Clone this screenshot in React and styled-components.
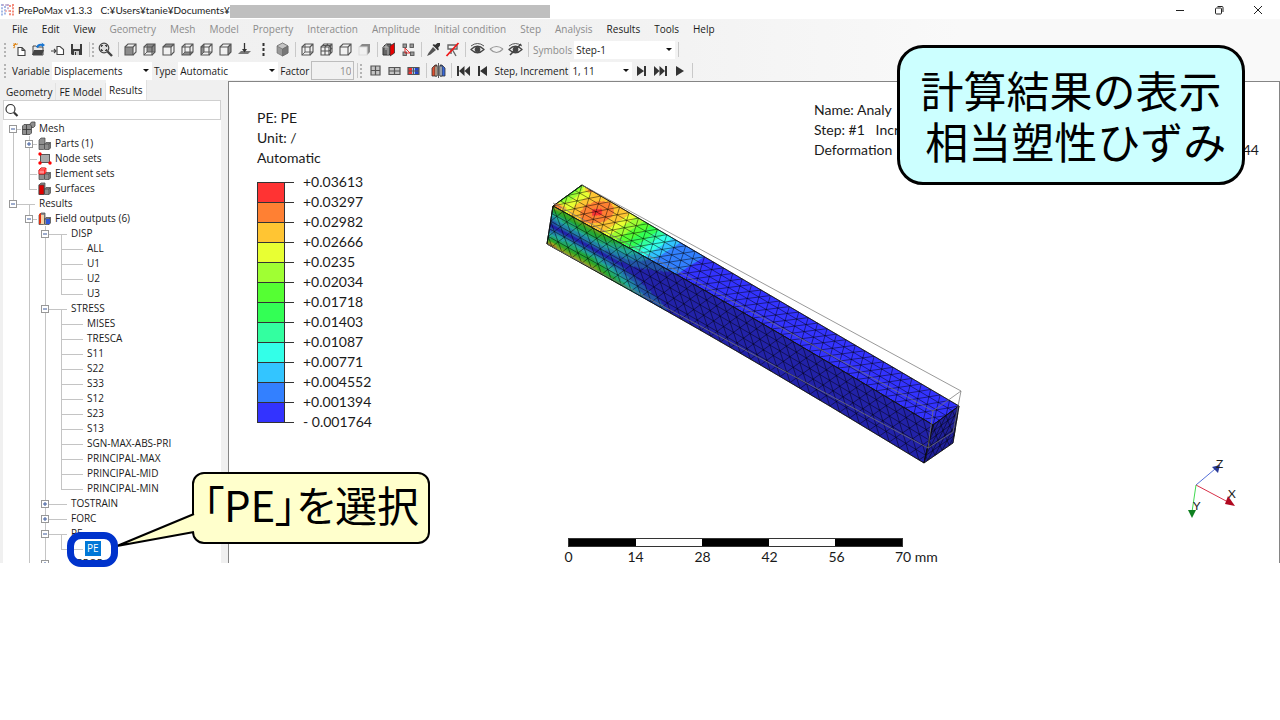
import React from "react";
import styled, { createGlobalStyle, css } from "styled-components";

const GlobalStyle = createGlobalStyle`
	* {
		box-sizing: border-box;
	}
	body {
		margin: 0;
		background: #fff;
	}
	button, input, select {
		font: inherit;
		color: inherit;
		border: 0;
		margin: 0;
		padding: 0;
		background: none;
	}
`;

const Page = styled.div`
	position: relative;
	min-height: 100vh;
	overflow: hidden;
	font-family: "Open Sans", "Noto Sans CJK JP", sans-serif;
	font-size: 10px;
	color: #1a1a1a;
`;

/* ---------- title bar ---------- */

const TitleBar = styled.header`
	display: flex;
	align-items: center;
	height: 19px;
	padding-right: 3px;
	background: #fff;
	font-family: Lato, "Open Sans", sans-serif;
	white-space: nowrap;
`;
const AppTitle = styled.span`
	margin: 0 8px 0 3px;
`;
const Redacted = styled.span`
	width: 320px;
	height: 13px;
	margin-top: 4px;
	background: #bfbfbf;
`;
const WindowButtons = styled.div`
	display: flex;
	margin-left: auto;
`;
const WindowButton = styled.button`
	display: flex;
	align-items: center;
	justify-content: center;
	width: 39px;
	height: 19px;
`;

/* ---------- menu and toolbars ---------- */

const Bars = styled.div`
	background: linear-gradient(90deg, #f0f0f0 0%, #f2f2f2 50%, #f9f9f9 75%);
`;
const MenuBar = styled.nav`
	display: flex;
	align-items: center;
	gap: 14px;
	height: 20px;
	padding-left: 12px;
`;
const MenuItem = styled.button`
	white-space: nowrap;
	color: ${(props) => (props.disabled ? "#8c8c8c" : "#1a1a1a")};
`;
const ToolBar = styled.div`
	display: flex;
	align-items: center;
	height: 21px;
	padding-left: 4px;
`;
const Grip = styled.span`
	width: 2px;
	height: 14px;
	margin-right: ${(props) => props.$after || 4}px;
	background: repeating-linear-gradient(#b4b4b4 0 2px, transparent 2px 4px);
`;
const Separator = styled.span`
	width: 1px;
	height: 15px;
	margin: 0 2px 0 3px;
	background: #c9c9c9;
`;
const ToolButton = styled.button`
	display: flex;
	align-items: center;
	justify-content: center;
	flex: none;
	width: 19px;
	height: 19px;
`;
const ToolLabel = styled.label`
	flex: none;
	margin: 0 2px;
	white-space: nowrap;
	color: ${(props) => (props.$muted ? "#8c8c8c" : "#1a1a1a")};
`;
const SelectBox = styled.span`
	position: relative;
	flex: none;
	width: ${(props) => props.$width}px;
	&::after {
		content: "";
		position: absolute;
		right: 3px;
		top: 7px;
		border: 3px solid transparent;
		border-top-color: #111;
		pointer-events: none;
	}
`;
const Select = styled.select`
	appearance: none;
	width: 100%;
	height: 18px;
	padding-left: 2px;
	background: #fff;
`;
const FactorInput = styled.input`
	width: 43px;
	height: 19px;
	padding-right: 2px;
	text-align: right;
	color: #8c8c8c;
	border: 1px solid #bdbdbd;
`;

/* ---------- side panel ---------- */

const Main = styled.main`
	display: flex;
`;
const SidePanel = styled.aside`
	flex: none;
	width: 228px;
	padding: 0 7px 0 3px;
	background: #f0f0f0;
`;
const Tabs = styled.div`
	display: flex;
	align-items: flex-end;
	height: 19px;
`;
const Tab = styled.button`
	height: ${(props) => (props.$active ? 20 : 17)}px;
	padding: 0 3px;
	background: ${(props) => (props.$active ? "#fff" : "#f0f0f0")};
	border-right: 1px solid #e2e2e2;
	white-space: nowrap;
`;
const SearchBox = styled.label`
	display: flex;
	align-items: center;
	height: 20px;
	background: #fff;
	border: 1px solid #cfcfcf;
`;
const SearchInput = styled.input`
	flex: 1;
	min-width: 0;
	outline: 0;
`;
const Tree = styled.div`
	padding: 1px 0 0 2px;
	background: #fff;
`;
const TreeRow = styled.div`
	display: flex;
	align-items: stretch;
	height: ${(props) => (props.$cut ? 7 : 15)}px;
	overflow: hidden;
`;
const line = "#c4c4c4";
const Guide = styled.span`
	position: relative;
	flex: none;
	width: 16px;
	${(props) =>
		props.$up &&
		css`
			background: linear-gradient(${line}, ${line}) 8px 0 / 1px 8px no-repeat;
		`}
	&::before {
		content: "";
		position: absolute;
		left: 8px;
		top: 8px;
		height: 7px;
		border-left: ${(props) => (props.$down ? `1px solid ${line}` : "0")};
	}
	&::after {
		content: "";
		position: absolute;
		left: ${(props) => (props.$across === "full" ? 0 : 8)}px;
		right: ${(props) => (props.$across === "full" ? 2 : 0)}px;
		top: 8px;
		border-top: ${(props) => (props.$across ? `1px solid ${line}` : "0")};
	}
`;
const Expander = styled.svg`
	position: absolute;
	z-index: 1;
	left: 4px;
	top: 4px;
`;
const TreeIcon = styled.span`
	flex: none;
	width: 16px;
`;
const TreeLabel = styled.span`
	padding: 0 2px;
	line-height: 15px;
	white-space: nowrap;
	${(props) =>
		props.$selected &&
		css`
			color: #fff;
			background: #0078d7;
		`}
`;

/* ---------- viewer ---------- */

const Viewer = styled.section`
	flex: 1;
	min-width: 0;
	display: grid;
	grid-template-columns: 311px 1fr 465px;
	grid-template-rows: 98px 340px 43px;
	background: #fff;
	border: 1px solid #858585;
	border-bottom: 0;
	font-family: Lato, "Open Sans", sans-serif;
	font-size: 14px;
	line-height: 20px;
`;
const Legend = styled.div`
	grid-row: 1 / 4;
	padding: 26px 0 0 28px;
`;
const Scale = styled.div`
	display: flex;
	margin-top: 4px;
`;
const Swatches = styled.div`
	width: 28px;
	margin-top: 10px;
`;
const Swatch = styled.div`
	height: 20px;
	background: ${(props) => props.$color};
	border: 1px solid #333;
	border-bottom: 0;
	&:last-child {
		height: 21px;
		border-bottom: 1px solid #333;
	}
`;
const Tick = styled.div`
	display: flex;
	align-items: center;
	gap: 9px;
	height: 20px;
	&::before {
		content: "";
		width: 9px;
		border-top: 1px solid #333;
	}
`;
const Info = styled.div`
	grid-column: 3;
	padding: 18px 20px 0 0;
	white-space: pre;
`;
const InfoLine = styled.div`
	display: flex;
	justify-content: space-between;
`;
const Stage = styled.div`
	grid-column: 2 / 4;
	grid-row: 2;
	display: flex;
	justify-content: space-between;
`;
const Model = styled.svg`
	flex: none;
`;
const Triad = styled.svg`
	align-self: flex-end;
	margin-right: 34px;
	overflow: visible;
`;
const Ruler = styled.div`
	grid-column: 2 / 4;
	grid-row: 3;
	padding: 18px 0 0 28px;
`;
const RulerBar = styled.div`
	display: flex;
	width: 335px;
	height: 9px;
	border: 1px solid #333;
`;
const RulerPart = styled.span`
	flex: 1;
	background: ${(props) => (props.$filled ? "#000" : "#fff")};
`;
const RulerNumbers = styled.div`
	display: flex;
	margin-left: -33px;
`;
const RulerNumber = styled.span`
	width: 67px;
	text-align: center;
	white-space: nowrap;
	&:last-child {
		padding-left: 25px;
		text-align: left;
	}
`;

/* ---------- notes on top of the window ---------- */

const Headline = styled.h1`
	position: absolute;
	top: 45px;
	right: 35px;
	width: 348px;
	height: 140px;
	margin: 0;
	padding: 16px 0;
	border: 3px solid #000;
	border-radius: 26px;
	background: #ccffff;
	color: #000;
	font: 400 43px / 51px "Noto Sans CJK JP", sans-serif;
	text-align: center;
	white-space: pre;
`;
const Note = styled.p`
	position: absolute;
	left: 192px;
	top: 472px;
	width: 238px;
	height: 72px;
	margin: 0;
	border: 2px solid #000;
	border-radius: 12px;
	background: #ffffcc;
	color: #000;
	font: 400 42px / 60px "Noto Sans CJK JP", sans-serif;
	font-feature-settings: "palt";
	text-align: center;
	white-space: nowrap;
`;
const NoteTail = styled.svg`
	position: absolute;
	left: 114px;
	top: 508px;
`;
const Ring = styled.div`
	position: absolute;
	left: 67px;
	top: 532px;
	width: 51px;
	height: 35px;
	border: 7px solid #0033cc;
	border-radius: 14px;
`;

/* ---------- icons ---------- */

const CUBE_FACES = {
	front: "M2 5H10V13H2Z",
	back: "M5 2H13V10H5Z",
	top: "M2 5L5 2H13L10 5Z",
	bottom: "M2 13L5 10H13L10 13Z",
	left: "M2 5L5 2V10L2 13Z",
	right: "M10 5L13 2V10L10 13Z",
};

const Cube = ({ face, wire, grid, solid }) => (
	<g fill='none' stroke='#555' strokeWidth='1.1'>
		{face && <path d={CUBE_FACES[face]} fill='#8c8c8c' stroke='none' />}
		{solid && <path d='M2 5L5 2H13V10L10 13V5Z' fill='#888' stroke='none' />}
		<path d='M2 5H10V13H2Z' stroke={solid ? "#ddd" : "#555"} />
		{!solid && <path d='M2 5L5 2H13V10L10 13M10 5L13 2' />}
		{wire && <path d='M5 2V10H13M5 10L2 13' strokeWidth='0.9' />}
		{grid && <path d='M6 5V13M2 9H10M6 5L9 2M10 9L13 6M3.500 3.500H11.500V11.500' />}
	</g>
);

const Grid = ({ rows, colored }) => (
	<g>
		{colored && (
			<>
				<rect x='2' y='4' width='4' height='8' fill='#e33' />
				<rect x='6' y='4' width='3' height='8' fill='#9cf' />
				<rect x='9' y='4' width='4' height='8' fill='#24c' />
			</>
		)}
		<path
			d={rows === "tall" ? "M3 3H12V12H3ZM7.500 3V12M3 7.500H12" : "M2 4.500H13V11.500H2ZM7.500 4V12M2 8H13"}
			fill={colored ? "none" : "#c4c4c4"}
			stroke='#555'
			strokeWidth='1.2'
		/>
	</g>
);

const Eye = ({ open, struck }) => (
	<g fill='none' stroke='#444' strokeWidth='1.2'>
		<path d={open || struck ? "M1 7.500Q7.500 1 14 7.500Q7.500 14 1 7.500Z" : "M1 7Q7.500 2 14 7M1 7Q7.500 14 14 7"} stroke={open || struck ? "#444" : "#999"} />
		{(open || struck) && <circle cx='7.500' cy='7.500' r='2.300' fill='#444' />}
		{(open || struck) && <path d='M1 4Q7.500 -1 14 4' strokeWidth='0.9' />}
		{struck && <path d='M2 13L13 2' strokeWidth='1.6' />}
	</g>
);

const Blocks = ({ accent }) => (
	<g stroke='#444' strokeWidth='0.7' fill='#8f8f8f'>
		<path d='M2 4L4 2H8L8 12L6.500 13.500H2Z' />
		<path d='M7.500 8L9 6.500H13.500V12L12 13.500H7.500Z' />
		<path d='M2 8.500H7M7.500 8H12V13.500M12 8L13.500 6.500' fill='none' />
		{accent === "element" && <path d='M2 4L4 2H9V6L7.500 8H2ZM2 4H7.500V8M7.500 4L9 2' fill='#ff8a8a' stroke='#f00' />}
		{accent === "surface" && <rect x='2' y='4' width='5' height='9.500' fill='#e00000' />}
		{accent === "field" && (
			<>
				<path d='M2 3L4 2V12L2 13.500Z' fill='#e03010' stroke='none' />
				<path d='M4 4H7V13H4Z' fill='#f3d3a8' stroke='none' />
				<path d='M9 8H13V13H9Z' fill='#3058d8' stroke='none' />
			</>
		)}
	</g>
);

const ICONS = {
	logo: (
		<g strokeWidth='1.6' strokeDasharray='2 1.2'>
			<path d='M2 2V14M5 4V13' stroke='#8fa8e0' />
			<path d='M2 3H8M8 2V8' stroke='#b9a3c9' />
			<path d='M9 4H13M13 2V14M10 8V14' stroke='#f0705c' />
			<path d='M5 9H10' stroke='#e8a8a8' />
		</g>
	),
	create: (
		<g fill='none' stroke='#444' strokeWidth='1.1'>
			<path d='M6 5.500H10L13 8.500V13.500H6ZM10 5.500V8.500H13' fill='#fff' />
			<path d='M3.500 1V3M1 3.500H3M1.500 1.500L3 3M5.500 1.500L4.500 3M1.500 6L3 4.500' stroke='#e08a20' />
		</g>
	),
	open: (
		<g>
			<path d='M2 13V4H5L6 5H12V13Z' fill='#e8e8e8' stroke='#444' />
			<path d='M1 13L3 8H13L11 13Z' fill='#444' />
			<path d='M5 5Q7 1 11 2L10.500 0.500L14 3L11 5.500V4Q8 3 7 6Z' fill='#1976d2' />
		</g>
	),
	importFile: (
		<g fill='none' stroke='#444' strokeWidth='1.1'>
			<path d='M7 4.500H10L13.500 7.500V12.500H7Z' fill='#fff' />
			<path d='M1 9H5.500M4 7L6 9L4 11' />
		</g>
	),
	save: (
		<g>
			<path d='M2 2H13V13H3L2 12Z' fill='#3c3c3c' />
			<rect x='4' y='2' width='7' height='5' fill='#e8e8e8' />
			<rect x='5' y='9' width='5' height='4' fill='#ccc' />
			<rect x='6' y='10' width='1' height='3' fill='#333' />
		</g>
	),
	fit: (
		<g fill='none' stroke='#444' strokeWidth='1.2'>
			<circle cx='6' cy='6' r='4.800' fill='#ddd' />
			<path d='M9.500 9.500L14 14' strokeWidth='2.4' />
			<path d='M3.500 5V3.500H5M7 3.500H8.500V5M8.500 7V8.500H7M5 8.500H3.500V7' />
		</g>
	),
	normal: (
		<g>
			<path d='M1 12L4 9H14L11 12Z' fill='#777' />
			<path d='M7.500 1V8' stroke='#333' strokeWidth='1.3' />
			<path d='M5 7H10L7.500 10.500Z' fill='#333' />
		</g>
	),
	vertical: <path d='M7.500 1V14' stroke='#333' strokeWidth='2' strokeDasharray='3 2' />,
	iso: (
		<g stroke='#666' strokeWidth='0.6'>
			<path d='M7.500 1L13 4V11L7.500 14L2 11V4Z' fill='#999' />
			<path d='M7.500 1L13 4L7.500 7L2 4Z' fill='#c4c4c4' />
			<path d='M7.500 7L13 4V11L7.500 14Z' fill='#777' />
		</g>
	),
	section: (
		<g>
			<path d='M1 5L4 2H9V11L7 13H1Z' fill='#666' stroke='#333' />
			<path d='M1 5H6V13M4 2V8' stroke='#ccc' fill='none' strokeWidth='0.8' />
			<path d='M8 4L12.500 1V11L8 14Z' fill='#e80000' stroke='#333' strokeWidth='0.8' />
		</g>
	),
	explode: (
		<g fill='#999' stroke='#555' strokeWidth='0.9'>
			<rect x='2' y='2' width='3.500' height='3.500' />
			<rect x='9' y='2' width='3.500' height='3.500' />
			<rect x='2' y='10' width='3.500' height='3.500' />
			<rect x='9.500' y='10' width='3.500' height='3.500' />
			<path d='M4 6V11H9M4 6L9 11' stroke='#e02020' fill='none' />
		</g>
	),
	pick: (
		<g fill='#333'>
			<path d='M7 5L10 8L4.500 12.500L1 14L2.500 11Z' fill='#555' />
			<path d='M6.500 3L8 2L9 3L11.500 1H14V3.500L12 6L13 7L12 8.500Z' />
		</g>
	),
	unpick: (
		<g fill='none'>
			<path d='M3 3H12V7H3ZM7 7L11 14M6 7V12' stroke='#666' strokeWidth='1.4' />
			<path d='M1.500 14L13.500 1' stroke='#f01818' strokeWidth='1.8' />
		</g>
	),
	mirror: (
		<g strokeWidth='0.8' stroke='#333'>
			<path d='M1 5L4 2H6V13H1Z' fill='#e05030' />
			<path d='M4 3H6V13H4Z' fill='#f4d6b8' />
			<path d='M9 2H11L14 5V13H9Z' fill='#3868d8' />
			<path d='M9 3H11V13H9Z' fill='#d8e4f8' />
			<path d='M7.500 0V15' />
		</g>
	),
	first: <path d='M1 3H3V13H1ZM8.500 3V13L3 8ZM14 3V13L8.500 8Z' fill='#333' />,
	prev: <path d='M3 3H5V13H3ZM12 3V13L5 8Z' fill='#333' />,
	next: <path d='M10 3H12V13H10ZM3 3V13L10 8Z' fill='#333' />,
	last: <path d='M12 3H14V13H12ZM1 3V13L6.500 8ZM6.500 3V13L12 8Z' fill='#333' />,
	play: <path d='M4 3V13L12 8Z' fill='#333' />,
	search: (
		<g fill='none' stroke='#333'>
			<circle cx='6.500' cy='6' r='4.500' strokeWidth='1.2' />
			<path d='M10 9.500L13.500 13' strokeWidth='2.2' />
		</g>
	),
	mesh: (
		<g stroke='#444' strokeWidth='0.8' fill='#8f8f8f'>
			<path d='M9 3L10.500 1H14V5L12.500 6.500H9Z' />
			<path d='M1.500 5L3 3.500H9L10.500 5V12L9 13.500H1.500Z' />
			<path d='M5.500 4V13.500M1.500 8.500H10' stroke='#333' />
		</g>
	),
	nodes: (
		<g>
			<rect x='3.500' y='3.500' width='9' height='8' fill='#aaa' stroke='#555' />
			<circle cx='3' cy='3' r='1.700' fill='#f00' />
			<circle cx='3' cy='12' r='1.700' fill='#f00' />
			<circle cx='13' cy='12' r='1.700' fill='#f00' />
		</g>
	),
	front: <Cube face='front' />,
	back: <Cube face='back' wire />,
	top: <Cube face='top' />,
	bottom: <Cube face='bottom' wire />,
	left: <Cube face='left' wire />,
	right: <Cube face='right' />,
	wire: <Cube wire />,
	elements: <Cube grid />,
	outline: <Cube />,
	solid: <Cube solid />,
	contour: <Grid rows='tall' />,
	undeformed: <Grid />,
	colored: <Grid colored />,
	show: <Eye open />,
	hide: <Eye />,
	invert: <Eye struck />,
	parts: <Blocks />,
	elementSets: <Blocks accent='element' />,
	surfaces: <Blocks accent='surface' />,
	field: <Blocks accent='field' />,
};

const Icon = ({ name }) => (
	<svg width='15' height='15' viewBox='0 0 15 15' aria-hidden='true'>
		{ICONS[name]}
	</svg>
);

const Tools = ({ names }) =>
	names.map((name) => (
		<ToolButton key={name} aria-label={name}>
			<Icon name={name} />
		</ToolButton>
	));

/* ---------- tree data ---------- */

const leaves = (names) => names.map((label) => ({ label }));

const TREE = [
	{
		label: "Mesh",
		icon: "mesh",
		children: [
			{ label: "Parts (1)", icon: "parts", closed: true },
			{ label: "Node sets", icon: "nodes" },
			{ label: "Element sets", icon: "elementSets" },
			{ label: "Surfaces", icon: "surfaces" },
		],
	},
	{
		label: "Results",
		children: [
			{
				label: "Field outputs (6)",
				icon: "field",
				more: true,
				children: [
					{ label: "DISP", children: leaves(["ALL", "U1", "U2", "U3"]) },
					{
						label: "STRESS",
						children: leaves([
							"MISES",
							"TRESCA",
							"S11",
							"S22",
							"S33",
							"S12",
							"S23",
							"S13",
							"SGN-MAX-ABS-PRI",
							"PRINCIPAL-MAX",
							"PRINCIPAL-MID",
							"PRINCIPAL-MIN",
						]),
					},
					{ label: "TOSTRAIN", closed: true },
					{ label: "FORC", closed: true },
					{ label: "PE", children: [{ label: "PE", selected: true }] },
					{ label: "ERROR", closed: true, cut: true },
				],
			},
		],
	},
];

const TreeNodes = ({ nodes, trail = [] }) =>
	nodes.map((node, i) => {
		const goesOn = i < nodes.length - 1 || node.more;
		return (
			<React.Fragment key={node.label}>
				<TreeRow $cut={node.cut}>
					{trail.map((open, level) => (
						<Guide key={level} $up={open} $down={open} />
					))}
					<Guide $up={trail.length > 0 || i > 0} $down={goesOn} $across='half'>
						{(node.children || node.closed) && (
							<Expander width='9' height='9'>
								<rect x='0.500' y='0.500' width='7' height='7' fill='#fff' stroke='#989898' />
								<path d={node.closed ? "M2 4H6M4 2V6" : "M2 4H6"} stroke='#3c5a9c' />
							</Expander>
						)}
					</Guide>
					{node.icon ? (
						<TreeIcon>
							<Icon name={node.icon} />
						</TreeIcon>
					) : (
						<Guide $across='full' $down={Boolean(node.children)} />
					)}
					<TreeLabel $selected={node.selected}>{node.label}</TreeLabel>
				</TreeRow>
				{node.children && <TreeNodes nodes={node.children} trail={[...trail, goesOn]} />}
			</React.Fragment>
		);
	});

/* ---------- model ---------- */

// low to high
const COLORS = [
	[51, 51, 255],
	[51, 128, 255],
	[51, 197, 255],
	[51, 255, 232],
	[51, 255, 160],
	[51, 255, 85],
	[85, 255, 51],
	[160, 255, 51],
	[232, 255, 51],
	[255, 197, 51],
	[255, 128, 51],
	[255, 51, 51],
];
const shade = (level, light) => `rgb(${COLORS[level].map((c) => Math.round(c * light)).join(",")})`;

const STRAIN = [
	[0, 6.4],
	[0.015, 8],
	[0.04, 8.8],
	[0.08, 9.3],
	[0.12, 9.2],
	[0.145, 8],
	[0.17, 6.6],
	[0.2, 5.2],
	[0.22, 4],
	[0.24, 3],
	[0.26, 2],
	[0.325, 1],
	[0.33, 0],
];
const strainAt = (u) => {
	const n = STRAIN.findIndex((p) => p[0] > u);
	if (n < 1) return 0;
	const [a, b] = [STRAIN[n - 1], STRAIN[n]];
	return a[1] + ((b[1] - a[1]) * (u - a[0])) / (b[0] - a[0]);
};
const spot = (u, v, cu, cv, ru, rv) => Math.exp(-(((u - cu) / ru) ** 2) - ((v - cv) / rv) ** 2);

const topStrain = (u, v) =>
	strainAt(u) + 1.9 * spot(u, v, 0.075, 0.5, 0.035, 0.45) + 4 * spot(u, v, 0.005, 0.95, 0.015, 0.12) + 2 * spot(u, v, 0.02, 0, 0.015, 0.1);
const sideStrain = (u, v) =>
	strainAt(u) * (0.06 + (v < 0.5 ? 0.75 : 0.88) * Math.abs(2 * v - 1)) + 3 * spot(u, v, 0.01, 1, 0.02, 0.12) + 3 * spot(u, v, 0, 0, 0.02, 0.12);

// corners: start near, end near, end far, start far
const FACES = [
	{ name: "top", corners: [[42, 5], [419, 226], [393, 245], [13, 26]], cells: [40, 4], light: 1, value: topStrain, bend: [0, 1] },
	{ name: "side", corners: [[13, 26], [393, 245], [384, 283], [7, 64]], cells: [38, 5], light: 0.66, value: sideStrain, bend: [1, 1] },
	{ name: "end", corners: [[393, 245], [419, 226], [413, 263], [384, 283]], cells: [4, 5], light: 0.6, value: () => 0, bend: [0, 0] },
];

const pointOn = (face, u, v) => {
	const [a, b, c, d] = face.corners;
	const sag = 3 * Math.sin(Math.PI * u) * (face.bend[0] * (1 - v) + face.bend[1] * v);
	const at = (k) => (1 - v) * ((1 - u) * a[k] + u * b[k]) + v * ((1 - u) * d[k] + u * c[k]);
	return `${at(0).toFixed(1)} ${(at(1) - sag).toFixed(1)}`;
};

const facePath = (face) => {
	const points = [];
	for (let i = 0; i <= 20; i++) points.push(pointOn(face, i / 20, 0));
	for (let i = 20; i >= 0; i--) points.push(pointOn(face, i / 20, 1));
	return `M${points.join("L")}Z`;
};

const bandPaths = (face) => {
	const paths = {};
	const du = 0.004;
	const dv = 0.05;
	for (let i = 0; i < 85; i++) {
		for (let j = 0; j < 20; j++) {
			const u = i * du;
			const v = j * dv;
			const level = Math.max(0, Math.min(11, Math.floor(face.value(u + du / 2, v + dv / 2))));
			if (level > 0) {
				const quad = [pointOn(face, u, v), pointOn(face, u + du, v), pointOn(face, u + du, v + dv), pointOn(face, u, v + dv)];
				paths[level] = (paths[level] || "") + `M${quad.join("L")}Z`;
			}
		}
	}
	return Object.entries(paths);
};

const meshPath = (face) => {
	const [nu, nv] = face.cells;
	const clamp = (n) => Math.max(0, Math.min(1, n / nu));
	let d = "";
	for (let j = 0; j <= nv; j++) {
		const shift = j % 2 ? 0.5 : 0;
		for (let i = -1; i <= nu; i++) {
			const from = pointOn(face, clamp(i + shift), j / nv);
			d += `M${from}L${pointOn(face, clamp(i + shift + 1), j / nv)}`;
			if (j < nv) {
				d += `M${from}L${pointOn(face, clamp(i + shift + 0.5), (j + 1) / nv)}`;
				d += `M${from}L${pointOn(face, clamp(i + shift - 0.5), (j + 1) / nv)}`;
			}
		}
	}
	return d;
};

const Beam = () => (
	<Model width='430' height='290' role='img' aria-label='Deformed beam'>
		{FACES.map((face) => (
			<g key={face.name}>
				<path d={facePath(face)} fill={shade(0, face.light)} />
				{face.name !== "end" &&
					bandPaths(face).map(([level, d]) => (
						<path key={level} d={d} fill={shade(level, face.light)} stroke={shade(level, face.light)} strokeWidth='0.5' />
					))}
				<path d={meshPath(face)} fill='none' stroke='#000' strokeWidth='0.8' strokeOpacity='0.6' />
				<path d={facePath(face)} fill='none' stroke='#111' strokeWidth='0.8' />
			</g>
		))}
		<path
			d='M42 5L421 211L393 231L13 23M393 231L388 268L7 64M421 211L413 252L388 268'
			fill='none'
			stroke='#777'
			strokeWidth='1'
			strokeOpacity='0.75'
		/>
	</Model>
);

const LEVELS = [
	"+0.03613",
	"+0.03297",
	"+0.02982",
	"+0.02666",
	"+0.0235",
	"+0.02034",
	"+0.01718",
	"+0.01403",
	"+0.01087",
	"+0.00771",
	"+0.004552",
	"+0.001394",
	"- 0.001764",
];

const MENU = [
	"File",
	"Edit",
	"View",
	"Geometry",
	"Mesh",
	"Model",
	"Property",
	"Interaction",
	"Amplitude",
	"Initial condition",
	"Step",
	"Analysis",
	"Results",
	"Tools",
	"Help",
];
const ENABLED = ["File", "Edit", "View", "Results", "Tools", "Help"];

const Dropdown = ({ id, width, value }) => (
	<SelectBox $width={width}>
		<Select id={id} defaultValue={value}>
			<option>{value}</option>
		</Select>
	</SelectBox>
);

const App = () => (
	<Page>
		<GlobalStyle />
		<TitleBar>
			<Icon name='logo' />
			<AppTitle>PrePoMax v1.3.3</AppTitle>
			<span>C:¥Users¥tanie¥Documents¥</span>
			<Redacted />
			<WindowButtons>
				<WindowButton aria-label='Minimize'>
					<svg width='10' height='10'>
						<path d='M1 5.500H9' stroke='#222' />
					</svg>
				</WindowButton>
				<WindowButton aria-label='Restore'>
					<svg width='10' height='10' fill='none' stroke='#222'>
						<rect x='1.500' y='3' width='6' height='6' rx='1' />
						<path d='M3.500 1.500H8Q9 1.500 9 2.500V7' />
					</svg>
				</WindowButton>
				<WindowButton aria-label='Close'>
					<svg width='10' height='10'>
						<path d='M1 1L9 9M9 1L1 9' stroke='#222' />
					</svg>
				</WindowButton>
			</WindowButtons>
		</TitleBar>

		<Bars>
			<MenuBar>
				{MENU.map((item) => (
					<MenuItem key={item} disabled={!ENABLED.includes(item)}>
						{item}
					</MenuItem>
				))}
			</MenuBar>
			<ToolBar>
				<Grip />
				<Tools names={["create", "open", "importFile", "save"]} />
				<Separator />
				<Grip $after={2} />
				<Tools names={["fit"]} />
				<Separator />
				<Tools names={["front", "back", "top", "bottom", "left", "right", "normal", "vertical", "iso"]} />
				<Separator />
				<Tools names={["wire", "elements", "outline", "solid"]} />
				<Separator />
				<Tools names={["section", "explode"]} />
				<Separator />
				<Tools names={["pick", "unpick"]} />
				<Separator />
				<Tools names={["show", "hide", "invert"]} />
				<Separator />
				<ToolLabel htmlFor='symbols' $muted>
					Symbols
				</ToolLabel>
				<Dropdown id='symbols' width={101} value='Step-1' />
				<Separator />
			</ToolBar>
			<ToolBar>
				<Grip />
				<ToolLabel htmlFor='variable'>Variable</ToolLabel>
				<Dropdown id='variable' width={100} value='Displacements' />
				<ToolLabel htmlFor='type'>Type</ToolLabel>
				<Dropdown id='type' width={100} value='Automatic' />
				<ToolLabel htmlFor='factor'>Factor</ToolLabel>
				<FactorInput id='factor' defaultValue='10' disabled />
				<Separator />
				<Grip $after={4} />
				<Tools names={["contour", "undeformed", "colored"]} />
				<Separator />
				<Tools names={["mirror"]} />
				<Separator />
				<Tools names={["first", "prev"]} />
				<ToolLabel htmlFor='increment'>Step, Increment</ToolLabel>
				<Dropdown id='increment' width={62} value='1, 11' />
				<Tools names={["next", "last", "play"]} />
				<Separator />
			</ToolBar>
		</Bars>

		<Main>
			<SidePanel>
				<Tabs>
					<Tab>Geometry</Tab>
					<Tab>FE Model</Tab>
					<Tab $active>Results</Tab>
				</Tabs>
				<SearchBox>
					<Icon name='search' />
					<SearchInput aria-label='Search' />
				</SearchBox>
				<Tree>
					<TreeNodes nodes={TREE} />
				</Tree>
			</SidePanel>

			<Viewer>
				<Legend>
					<div>PE: PE</div>
					<div>Unit: /</div>
					<div>Automatic</div>
					<Scale>
						<Swatches>
							{COLORS.map((c, i) => (
								<Swatch key={i} $color={shade(11 - i, 1)} />
							))}
						</Swatches>
						<div>
							{LEVELS.map((level) => (
								<Tick key={level}>{level}</Tick>
							))}
						</div>
					</Scale>
				</Legend>
				<Info>
					<InfoLine>Name: Analy</InfoLine>
					<InfoLine>Step: #1   Incr</InfoLine>
					<InfoLine>
						<span>Deformation</span>
						<span>44</span>
					</InfoLine>
				</Info>
				<Stage>
					<Beam />
					<Triad width='60' height='62' fontSize='12' fill='#222'>
						<path d='M11 27L30 11' stroke='#5570d8' />
						<path d='M11 27L43 44' stroke='#d83048' />
						<path d='M11 27L7 54' stroke='#40d850' />
						<path d='M27 9L35 7L33 15Z' fill='#2a3a98' />
						<path d='M43 38L50 48L40 46Z' fill='#b00820' />
						<path d='M3 52H11L7 60Z' fill='#0f8020' />
						<text x='31' y='10'>Z</text>
						<text x='43' y='40'>X</text>
						<text x='8' y='52'>Y</text>
					</Triad>
				</Stage>
				<Ruler>
					<RulerBar>
						{[0, 1, 2, 3, 4].map((n) => (
							<RulerPart key={n} $filled={n % 2 === 0} />
						))}
					</RulerBar>
					<RulerNumbers>
						{["0", "14", "28", "42", "56", "70 mm"].map((n) => (
							<RulerNumber key={n}>{n}</RulerNumber>
						))}
					</RulerNumbers>
				</Ruler>
			</Viewer>
		</Main>

		<Headline>{"計算結果の表示\n 相当塑性ひずみ"}</Headline>
		<Note>「PE」を選択</Note>
		<NoteTail width='82' height='42'>
			<path d='M80 6L3 38L80 24' fill='#ffffcc' stroke='#000' strokeWidth='2' />
		</NoteTail>
		<Ring />
	</Page>
);

export default App;
